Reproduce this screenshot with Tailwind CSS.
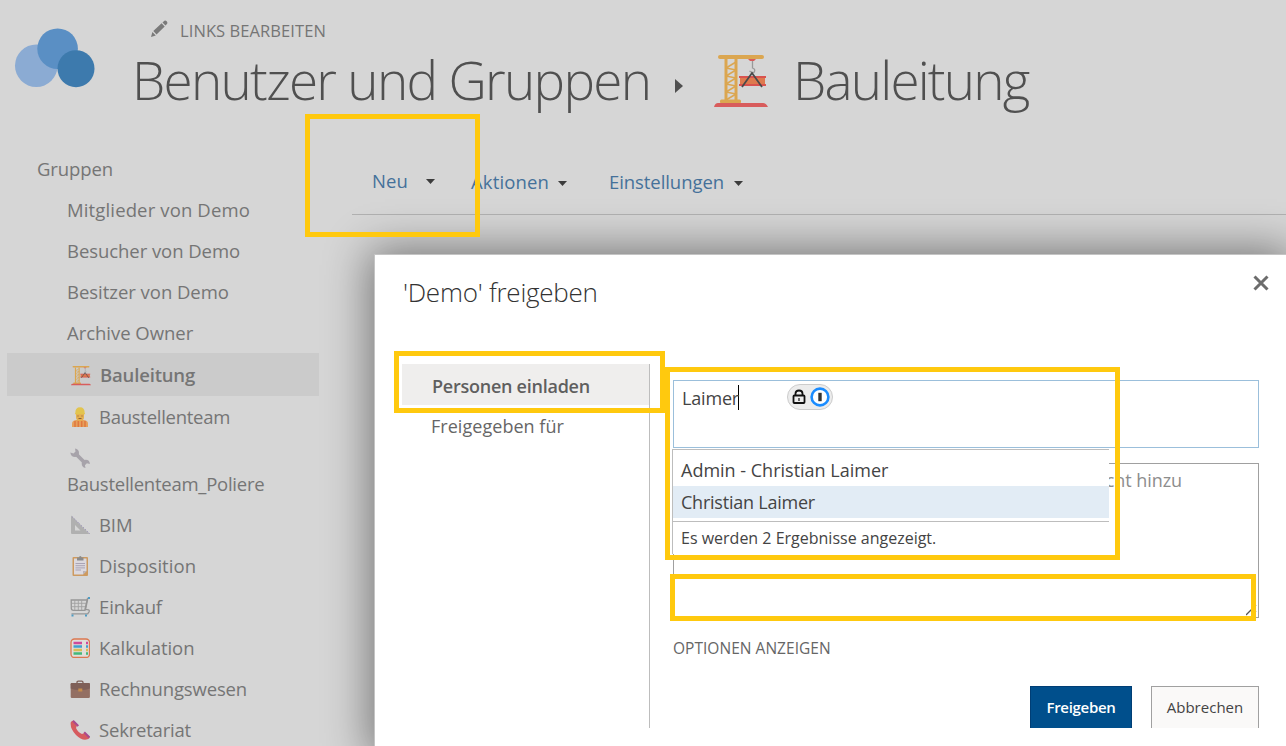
<!DOCTYPE html>
<html lang="de">
<head>
<meta charset="utf-8">
<title>Benutzer und Gruppen – Bauleitung</title>
<script src="https://cdn.jsdelivr.net/npm/@tailwindcss/browser@4"></script>
</head>
<body class="relative h-[746px] w-[1286px] overflow-hidden bg-[#d6d6d6] font-['Open_Sans',sans-serif] text-[18.5px] text-[#757575]">
<svg class="hidden">
  <symbol id="crane" viewBox="0 0 54 54">
    <path d="M12 4v43M22 4v43" stroke="#dba650" stroke-width="3"/>
    <path d="M12 13l10-6M12 21l10-6M12 29l10-6M12 37l10-6M12 45l10-6M12 13l10 2M12 21l10 2M12 29l10 2M12 37l10 2" stroke="#dba650" stroke-width="1.500" fill="none"/>
    <rect x="4" y="0" width="46" height="4" rx="2" fill="#dba650"/>
    <rect x="6" y="44.500" width="21" height="4" rx="1.500" fill="#dba650"/>
    <path d="M0 52q1-4 4-4h45q3 0 5 4z" fill="#d85c5c"/>
    <path d="M34 4h8l-2 2h-4z" fill="#d85c5c"/>
    <path d="M38.500 6v7q3 1 2 3.500t-5-.5" fill="none" stroke="#999" stroke-width="1.300"/>
    <rect x="26" y="22" width="25" height="8" fill="#de7a4e"/>
    <path d="M25 22h27M25 30h27" stroke="#d9534f" stroke-width="2"/>
    <path d="M28 32l10-14 10 14" fill="none" stroke="#4a4a4a" stroke-width="1.800"/>
  </symbol>
  <symbol id="worker" viewBox="0 0 20 20">
    <path d="M2 20v-3.500q0-3 4-3.500h8q4 .5 4 3.500V20z" fill="#e6a05c"/>
    <path d="M5 14v6M15 14v6M8.300 14v6M11.700 14v6" stroke="#e0773f" stroke-width="1.500" fill="none"/>
    <path d="M6 6h8v4q0 4-4 4t-4-4z" fill="#e5b04f"/>
    <path d="M5.300 6q0-5.800 4.700-5.800T14.700 6l.5 1.300H4.800z" fill="#e2c44e"/>
    <path d="M7.500 9h1M11.500 9h1M8.500 11.500h3" stroke="#8a5f3a" stroke-width="1"/>
  </symbol>
  <symbol id="wrench" viewBox="0 0 20 20">
    <path d="M5.500 5.500l10 10" stroke="#a7a3aa" stroke-width="3.800"/>
    <path d="M5 .5q4 .5 4 4.500 0 4-4 4T.3 4.500L3.500 5.500 5.500 3.500z" fill="#a7a3aa"/>
    <path d="M15.500 20q-3.800-.8-3.800-4.500 0-3.800 4-3.800t4.200 4.300l-3-.8-2 2z" fill="#a7a3aa"/>
  </symbol>
  <symbol id="ruler" viewBox="0 0 20 20">
    <path fill-rule="evenodd" d="M1 .5l18.500 18.500H2q-1 0-1-1zM5 10v5.500h5.500z" fill="#b0b0b0"/>
    <path d="M2 1.500L19.500 18.500" stroke="#8b80b0" stroke-width="1" stroke-dasharray="1 1.600"/>
  </symbol>
  <symbol id="clip" viewBox="0 0 20 20">
    <rect x="2.500" y="1" width="15.500" height="19" rx="1" fill="#cd9a60"/>
    <path d="M4 2.500H16.500V15L13 18.500H4z" fill="#dcd9df"/>
    <path d="M16.500 15H13v3.500z" fill="#b9b2b8"/>
    <path d="M7 1.500h2q0-1.500 1.300-1.500T11.500 1.500h2V4.500H7z" fill="#8b8b8b"/>
    <path d="M5.500 7.500H15M5.500 9.700H15M5.500 11.900H15M5.500 14H11" stroke="#aaa3b5" stroke-width="1"/>
  </symbol>
  <symbol id="cart" viewBox="0 0 20 20" fill="none">
    <path d="M1.200 3h16.300l-2 9.500q-.2.800-1 .8H3.500q-2.200 0-2.200-2z" stroke="#969696" stroke-width="1.300"/>
    <path d="M4.800 3v10M8.300 3v10M11.700 3v10M1.500 6.300H16M1.500 9.700H15" stroke="#a0a0a0" stroke-width=".9"/>
    <path d="M18.500 1.300h-1l-2.500 11 3.500.5q1.300.7.500 2l-1.300 2H1.500" stroke="#969696" stroke-width="1.300"/>
    <path d="M18 1h2M2.500 17.500v2M16 17.500v2" stroke="#4e9cc4" stroke-width="2"/>
  </symbol>
  <symbol id="abacus" viewBox="0 0 20 20">
    <rect x="1" y="1" width="18.500" height="18.500" rx="3.500" fill="#e0dedb" stroke="#dc7850" stroke-width="1.300"/>
    <g stroke-width="2.300"><path d="M3.500 5H12M16 5h2" stroke="#cf4a9b"/><path d="M3.500 8.500H12M16 8.500h2" stroke="#3fa0cf"/><path d="M3.500 12H12M16 12h2" stroke="#d9bd55"/><path d="M3.500 15.500H12M16 15.500h2" stroke="#43b87b"/></g>
  </symbol>
  <symbol id="case" viewBox="0 0 20 20">
    <path d="M7 4.500V3.500q0-1.300 1.300-1.300h3.400q1.300 0 1.300 1.300v1" fill="none" stroke="#7d5f57" stroke-width="1.300"/>
    <rect x=".7" y="4" width="19.200" height="15" rx="1.200" fill="#936f63"/>
    <path d="M.7 5q0-1 1-1h17.200q1 0 1 1v4.500q-4 1.500-9.600 1.500T.7 9.500z" fill="#7f5f57"/>
    <rect x="8.300" y="9.500" width="4" height="3" fill="#c48c4d"/>
  </symbol>
  <symbol id="phone" viewBox="0 0 20 20">
    <path d="M.7 2.500Q2 0 3.500 1L7 5.500 6 8q2 4.500 6 6l2.500-1 5 4q.5 1.500-2 2.300Q12 21 6 15 0 9 .7 2.500z" fill="#d65b5f"/>
    <path d="M3 .7L8.300 6M14.200 12.200l5.300 5.300" stroke="#a94a8e" stroke-width="2"/>
  </symbol>
</svg>

<header class="flex h-[148px]">
  <svg class="mt-[24px] ml-[12px] h-[68px] w-[86px] shrink-0" viewBox="12 24 86 68">
    <circle cx="36.300" cy="65.700" r="21.300" fill="#8babd3"/>
    <circle cx="57.600" cy="48.700" r="20.300" fill="#5a8fc4"/>
    <circle cx="76" cy="68.700" r="18.500" fill="#3d7aad"/>
  </svg>
  <div class="ml-[37px] flex flex-col pt-[18px]">
    <div class="flex h-[26px] items-center pl-[15px]">
      <svg class="mt-[-5px] h-[18px] w-[18px]" viewBox="0 0 18 18" fill="#7a7a7a"><path d="M1 17l1.400-5L5.800 15.500zM3.300 11L11.600 3.200 14.700 6.400 6.500 14.500zM12.500 2.500L14.400.8Q15.500.2 16.700 1.300 17.800 2.500 17.200 3.700L15.500 5.500z"/></svg>
      <a class="ml-[12px] text-[16.5px] tracking-[0.08px]">LINKS BEARBEITEN</a>
    </div>
    <h1 class="flex h-[72px] items-center text-[53px] leading-[72px] font-light whitespace-nowrap text-[#505050]">
      <span class="ml-[-5px] w-[522px] pl-[2px] tracking-[-1.7px]">Benutzer und Gruppen</span>
      <svg class="mt-[12px] ml-[22px] h-[14px] w-[9px]" viewBox="0 0 9 14"><path d="M1 0v14l8-7z" fill="#505050"/></svg>
      <svg class="mt-[3px] ml-[31px] h-[54px] w-[54px]"><use href="#crane"/></svg>
      <span class="ml-[25px] tracking-[-1.8px]">Bauleitung</span>
    </h1>
  </div>
</header>

<div class="flex">
  <nav class="flex w-[312px] shrink-0 flex-col pl-[7px] leading-[41px] whitespace-nowrap">
    <a class="h-[41px] pl-[30px] tracking-[-0.1px]">Gruppen</a>
    <a class="h-[41px] pl-[60px] tracking-[0.14px]">Mitglieder von Demo</a>
    <a class="h-[41px] pl-[60px] tracking-[-0.06px]">Besucher von Demo</a>
    <a class="h-[41px] pl-[60px] tracking-[-0.03px]">Besitzer von Demo</a>
    <a class="h-[41px] pl-[60px] tracking-[-0.03px]">Archive Owner</a>
    <a class="flex h-[43px] w-[312px] items-center gap-[9px] bg-[#cbcbcb] pl-[64px] font-semibold tracking-[-0.17px]"><svg class="mt-[2px] h-5 w-5"><use href="#crane"/></svg>Bauleitung</a>
    <a class="flex h-[41px] items-center gap-[9px] pl-[63px] tracking-[-0.27px]"><svg class="h-5 w-5"><use href="#worker"/></svg>Baustellenteam</a>
    <a class="flex h-[67px] flex-col pl-[60px] tracking-[-0.25px]"><svg class="mt-[11px] ml-[3px] h-5 w-5 shrink-0"><use href="#wrench"/></svg><span class="mt-[-5px]">Baustellenteam_Poliere</span></a>
    <a class="flex h-[41px] items-center gap-[9px] pl-[63px] tracking-[-0.1px]"><svg class="h-5 w-5"><use href="#ruler"/></svg>BIM</a>
    <a class="flex h-[41px] items-center gap-[9px] pl-[63px] tracking-[0.04px]"><svg class="h-5 w-5"><use href="#clip"/></svg>Disposition</a>
    <a class="flex h-[41px] items-center gap-[9px] pl-[63px] tracking-[-0.13px]"><svg class="h-5 w-5"><use href="#cart"/></svg>Einkauf</a>
    <a class="flex h-[41px] items-center gap-[9px] pl-[63px] tracking-[-0.05px]"><svg class="h-5 w-5"><use href="#abacus"/></svg>Kalkulation</a>
    <a class="flex h-[41px] items-center gap-[9px] pl-[63px] tracking-[-0.16px]"><svg class="h-5 w-5"><use href="#case"/></svg>Rechnungswesen</a>
    <a class="flex h-[41px] items-center gap-[9px] pl-[63px] tracking-[-0.2px]"><svg class="h-5 w-5"><use href="#phone"/></svg>Sekretariat</a>
  </nav>
  <main class="ml-[40px] flex-1">
    <div class="flex h-[67px] items-center border-b border-[#b1b1b1] pl-[20px] text-[#45719a]">
      <a class="mt-[-1px] flex w-[99px] items-center gap-[18px] tracking-[0.1px]">Neu<svg class="mt-[1px] h-[5px] w-[9px]" viewBox="0 0 9 5"><path d="M0 0h9L4.500 5z" fill="#3c3c3c"/></svg></a>
      <a class="mt-[1px] flex w-[138px] items-center gap-[9px] tracking-[0.14px]">Aktionen<svg class="mt-[3px] h-[5px] w-[9px]" viewBox="0 0 9 5"><path d="M0 0h9L4.500 5z" fill="#3c3c3c"/></svg></a>
      <a class="mt-[1px] flex items-center gap-[10px] tracking-[-0.07px]">Einstellungen<svg class="mt-[3px] h-[5px] w-[9px]" viewBox="0 0 9 5"><path d="M0 0h9L4.500 5z" fill="#3c3c3c"/></svg></a>
    </div>
  </main>
</div>

<!-- Share dialog -->
<section class="absolute top-[254px] left-[374px] flex h-[500px] w-[914px] flex-col border border-[#c4c4c4] bg-white text-[18px] shadow-[0_0_42px_4px_rgba(0,0,0,0.46)]">
  <div class="flex h-[109px] justify-between pt-[19px] pr-[18px] pl-[28px]">
    <h2 class="text-[26px] leading-[36px] font-light tracking-[-0.24px] text-[#333]">'Demo' freigeben</h2>
    <svg class="mt-[1px] h-[16px] w-[16px]" viewBox="0 0 16 16" stroke="#6c6c6c" stroke-width="3"><path d="M1.500 1.500l13 13M14.500 1.500l-13 13"/></svg>
  </div>
  <div class="flex h-[364px]">
    <div class="ml-[27px] w-[248px] shrink-0 border-r border-[#bdbdbd] text-[#666]">
      <a class="flex h-[41px] items-center bg-[#efeeed] pt-[3px] pl-[30px] font-semibold tracking-[-0.25px] text-[#5f5f5f]">Personen einladen</a>
      <a class="flex h-[41px] items-center pt-[1px] pl-[29px] tracking-[0.04px]">Freigegeben für</a>
    </div>
    <div class="relative ml-[23px] flex w-[586px] flex-col pt-[16px]">
      <div class="flex h-[68px] shrink-0 items-start border border-[#9bbfdb] pl-[8px] text-[#444]">
        <span class="mt-[4px] h-[25px] w-[57px] border-r border-black leading-[27px] tracking-[-0.18px]">Laimer</span>
        <span class="mt-[3px] ml-[48px] flex h-[26px] w-[46px] items-center justify-center gap-[4px] rounded-full border border-[#ccc] bg-[#ececec] pl-[2px]">
          <svg class="h-[16px] w-[14px]" viewBox="0 0 14 16" fill="none" stroke="#111" stroke-width="1.800"><rect x="1.500" y="6.500" width="11" height="7.500" rx=".8"/><path d="M3.500 6.500V4.500Q3.500 1.500 7 1.500t3.500 3v2"/><path d="M7 9v3" stroke-width="1.200"/></svg>
          <svg class="h-5 w-5" viewBox="0 0 20 20"><circle cx="10" cy="10" r="8.400" fill="#fff" stroke="#1a8cff" stroke-width="2.600"/><rect x="8.300" y="5.800" width="3.400" height="8.400" fill="#333"/></svg>
        </span>
      </div>
      <div class="relative mt-[15px] h-[155px] shrink-0 border border-[#a0a0a0] pt-[3px] pr-[76px] text-right tracking-[-0.06px] text-[#8d8d8d]">Nachricht hinzu
        <svg class="absolute right-0 bottom-0 h-[12px] w-[12px]" viewBox="0 0 12 12"><path d="M0 10L10 0M6 10l4-4" stroke="#555" stroke-width="1.300"/></svg>
      </div>
      <a class="mt-[18px] text-[15.5px] leading-[24px] tracking-[0.03px] text-[#666]">OPTIONEN ANZEIGEN</a>
      <div class="mt-[26px] flex h-[42px] justify-end gap-[19px] text-[15px]">
        <button class="w-[102px] border border-b-0 border-[#003e75] bg-[#004f8c] font-semibold tracking-[-0.3px] text-white">Freigeben</button>
        <button class="w-[108px] border border-b-0 border-[#a0a0a0] bg-[#faf9f8] tracking-[0.02px] text-[#444]">Abbrechen</button>
      </div>
      <!-- Suggestion list over the message field -->
      <div class="absolute top-[85px] left-[-1px] flex h-[105px] w-[437px] flex-col border-t border-l border-[#bdbdbd] bg-white text-[#444]">
        <a class="flex h-[36px] items-center pt-[5px] pl-[8px]">Admin - Christian Laimer</a>
        <a class="flex h-[32px] items-center bg-[#e2ecf5] pl-[8px] tracking-[-0.23px]">Christian Laimer</a>
        <p class="mt-[3px] flex h-[32px] items-center border-t border-[#bdbdbd] pl-[8px] text-[16px]">Es werden 2 Ergebnisse angezeigt.</p>
      </div>
    </div>
  </div>
</section>

<!-- Highlight frames -->
<div class="absolute top-[114px] left-[305px] h-[123px] w-[175px] border-5 border-[#ffc90e]"></div>
<div class="absolute top-[351px] left-[394px] h-[62px] w-[271px] border-5 border-[#ffc90e]"></div>
<div class="absolute top-[367px] left-[665px] h-[193px] w-[455px] border-5 border-[#ffc90e]"></div>
<div class="absolute top-[574px] left-[670px] h-[47px] w-[586px] border-5 border-[#ffc90e]"></div>
</body>
</html>
